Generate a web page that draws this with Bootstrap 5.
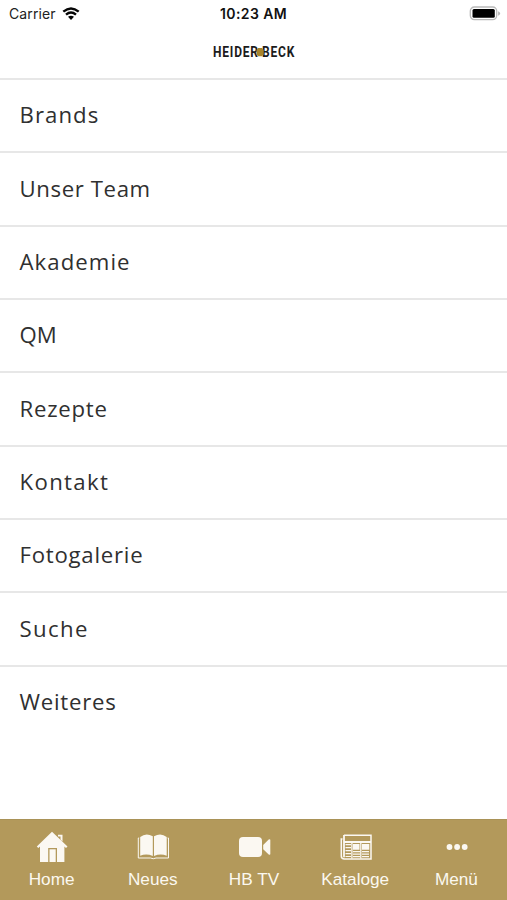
<!DOCTYPE html>
<html lang="de">
<head>
<meta charset="utf-8">
<meta name="viewport" content="width=device-width, initial-scale=1">
<title>Heiderbeck</title>
<link href="https://cdn.jsdelivr.net/npm/bootstrap@5.3.0/dist/css/bootstrap.min.css" rel="stylesheet">
<style>
  body { height: 900px; overflow: hidden; background: #fff; }
  svg { display: block; }
  .status-bar { height: 28px; padding: 0 6px 0 9px; font: 14px/28px Inter, sans-serif; color: #222; }
  .status-bar .side { flex: 1 1 0; }
  .carrier { font-size: 14px; letter-spacing: .1px; }
  .clock { font-weight: 600; font-size: 14px; letter-spacing: .4px; margin-right: 3px; color: #111; }
  .brand-bar { height: 50px; }
  .menu-list .list-group-item { height: 73.33px; padding: 0 19.5px .6px; border: 0; border-top: 2px solid #e7e7e7;
    font: 22.2px/1 "Open Sans", sans-serif; letter-spacing: .6px; color: #303030; }
  .menu-list .tight { letter-spacing: 0; }
  .menu-list .wide { letter-spacing: 1.05px; }
  .menu-list .wider { letter-spacing: 1.35px; }
  .menu-list .mid { letter-spacing: .75px; }
  .tab-bar { height: 81px; padding-left: 1px; background: #b3995b; border-top: 1px solid #a99257; }
  .tab-bar .nav-link { padding: 10px 0 0; color: #fbf8f0; font: 17.2px/20px "Liberation Sans", sans-serif; }
  .tab-bar svg { height: 34px; width: 40px; margin-bottom: 5px; fill: #fbf8f2; }
</style>
</head>
<body class="d-flex flex-column">
<header>
  <div class="status-bar d-flex align-items-center">
    <div class="side d-flex align-items-center">
      <span class="carrier">Carrier</span>
      <svg class="ms-1" width="22" height="16" viewBox="0 0 22 16" fill="none" stroke="#050505" stroke-width="2.4"><path d="M3.3 5.6Q11 -.8 18.7 5.6M6 8.7Q11 4.5 16 8.7"/><path d="M8 10.8Q11 8.5 14 10.8L11 14Z" fill="#050505" stroke="none"/></svg>
    </div>
    <span class="clock">10:23 AM</span>
    <div class="side d-flex justify-content-end">
      <svg width="32" height="16" viewBox="0 0 32 16"><rect x="1.3" y="1" width="26.4" height="12.6" rx="4" fill="#fff" stroke="#b9b9b9" stroke-width="1.3"/><rect x="3.5" y="3" width="22.3" height="8.8" rx="1.5" fill="#000"/><path d="M29.1 5.3Q31.1 6 31.1 7.5T29.1 9.7Z" fill="#b5b5b5"/></svg>
    </div>
  </div>
  <div class="brand-bar d-flex justify-content-center">
    <svg width="84" height="50" viewBox="0 0 84 50" font-family="Roboto, sans-serif" font-weight="700" font-size="12" fill="#1c1c1c"><g transform="scale(1 1.17)"><text x="1" y="24.7" textLength="45" lengthAdjust="spacing">HEIDER</text><text x="50" y="24.7" textLength="32.4" lengthAdjust="spacing">BECK</text></g><path d="M46 20H50L51.7 22V26.2L50 28.2H46L44.5 26.2V22Z" fill="#a8852c"/></svg>
  </div>
</header>
<main class="flex-grow-1">
  <div class="list-group list-group-flush menu-list">
    <a class="list-group-item d-flex align-items-center wide" href="#"><span>Brands</span></a>
    <a class="list-group-item d-flex align-items-center" href="#"><span>Unser Team</span></a>
    <a class="list-group-item d-flex align-items-center wide" href="#"><span>Akademie</span></a>
    <a class="list-group-item d-flex align-items-center tight" href="#"><span>QM</span></a>
    <a class="list-group-item d-flex align-items-center mid" href="#"><span>Rezepte</span></a>
    <a class="list-group-item d-flex align-items-center wider" href="#"><span>Kontakt</span></a>
    <a class="list-group-item d-flex align-items-center mid" href="#"><span>Fotogalerie</span></a>
    <a class="list-group-item d-flex align-items-center wider" href="#"><span>Suche</span></a>
    <a class="list-group-item d-flex align-items-center mid" href="#"><span>Weiteres</span></a>
  </div>
</main>
<nav class="tab-bar nav nav-fill nav-justified">
  <a class="nav-link nav-item d-flex flex-column align-items-center" href="#">
    <svg viewBox="0 0 40 34"><path d="M20 1.8L35.5 16.5L34 18L32.4 16.5V32H25V18H16.2V32H8V16.5L6.3 18L4.8 16.5Z"/><path d="M26 4.8H30.5V11.5L28.5 9.5V6.5H26Z"/><path d="M17.5 19.3H23.7V32H17.5Z"/></svg>Home</a>
  <a class="nav-link nav-item d-flex flex-column align-items-center" href="#">
    <svg viewBox="0 0 40 34"><path d="M7.2 7Q13 2.3 19.8 6.3V26Q13.5 23.4 7.2 25.7ZM21 6.3Q27.9 2.3 33.7 7V25.7Q27.5 23.4 21 26Z"/><path d="M6.2 8H5.3V28H17.5Q20.3 29.5 23 28H35.5V8H34.6" fill="none" stroke="#fbf8f2" stroke-width="1"/></svg>Neues</a>
  <a class="nav-link nav-item d-flex flex-column align-items-center" href="#">
    <svg viewBox="0 0 40 34"><rect x="5" y="7" width="23" height="20" rx="4"/><path d="M29.2 15L34.7 9.6Q36.3 8.8 36.3 10.1V24Q36.3 25.3 34.7 24.5L29.2 19.2Z"/></svg>HB TV</a>
  <a class="nav-link nav-item d-flex flex-column align-items-center" href="#">
    <svg viewBox="0 0 40 34"><g fill="none" stroke="#fbf8f2"><path d="M9 5.2H36V29H9.5Q6.3 29 6.3 26V9H7.5" stroke-width="1.5"/><path d="M9 5V27.3M9 12H36" stroke-width="1.8"/><path d="M10.5 14.7H16M10.5 17.7H16M10.5 20.7H16M10.5 23.7H16M10.5 26.5H16M18 21.7H25M18 24.2H25M18 26.7H25M27 21.7H34M27 24.2H34M27 26.7H34" stroke-width="1.2"/><path d="M16.9 12.5V28.5M25.8 12.5V28.5" stroke-width="1.3"/></g><path d="M18 14H24.5V19.7H18ZM27 14H34.3V19.7H27Z"/></svg>Kataloge</a>
  <a class="nav-link nav-item d-flex flex-column align-items-center" href="#">
    <svg viewBox="0 0 40 34"><circle cx="13.5" cy="17" r="2.9"/><circle cx="21.1" cy="17" r="2.9"/><circle cx="28.7" cy="17" r="2.9"/></svg>Menü</a>
</nav>
<script src="https://cdn.jsdelivr.net/npm/bootstrap@5.3.0/dist/js/bootstrap.bundle.min.js"></script>
</body>
</html>
